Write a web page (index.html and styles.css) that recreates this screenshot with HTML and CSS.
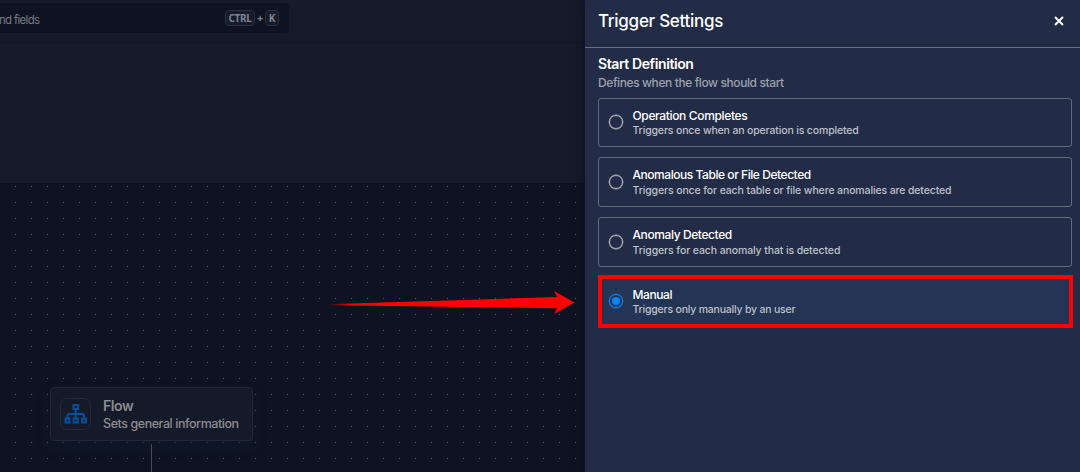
FILE: index.html
```html
<!DOCTYPE html>
<html lang="en">
<head>
<meta charset="utf-8">
<title>Trigger Settings</title>
<link rel="stylesheet" href="styles.css">
</head>
<body>
<div class="app">
  <main class="workspace">
    <header class="topbar">
      <div class="search">
        <span class="search-text">nd fields</span>
        <span class="shortcut"><kbd>CTRL</kbd><span class="plus">+</span><kbd class="key">K</kbd></span>
      </div>
    </header>
    <div class="band"></div>
    <section class="canvas">
      <div class="node">
        <div class="node-icon">
          <svg width="24" height="22" viewBox="0 0 24 22" fill="none" stroke="#02509f" stroke-width="2">
            <path d="M9.500 2h4.500v4h-4.500zM1.500 15.500h4v4h-4zM9.750 15.500h4v4h-4zM18 15.500h4v4h-4zM11.750 6v9.500M3.500 15.500v-3q0-1.500 1.500-1.500h13.500q1.500 0 1.500 1.500v3"/>
          </svg>
        </div>
        <div class="node-body">
          <div class="node-title">Flow</div>
          <div class="node-sub">Sets general information</div>
        </div>
      </div>
      <div class="connector"></div>
      <svg class="arrow" width="250" height="26" viewBox="0 0 250 26">
        <defs><linearGradient id="tail"><stop offset="0" stop-color="#f00" stop-opacity="0"/><stop offset=".1" stop-color="#f00"/></linearGradient></defs>
        <path fill="url(#tail)" d="M0 14.300L230 7L227 1L247.500 12.600L227 24L230 18.200L0 15.200z"/>
      </svg>
    </section>
  </main>
  <aside class="panel">
    <header class="panel-head">
      <h1>Trigger Settings</h1>
      <svg width="10" height="10" viewBox="0 0 10 10" stroke="#fff" stroke-width="1.900"><path d="M1 1l8 8M9 1l-8 8"/></svg>
    </header>
    <div class="panel-body">
      <h2>Start Definition</h2>
      <p class="lead">Defines when the flow should start</p>
      <div class="options">
        <label class="option first"><span class="radio"></span><span class="copy"><b class="t1">Operation Completes</b><small class="s1">Triggers once when an operation is completed</small></span></label>
        <label class="option"><span class="radio"></span><span class="copy"><b class="t2">Anomalous Table or File Detected</b><small class="s2">Triggers once for each table or file where anomalies are detected</small></span></label>
        <label class="option"><span class="radio"></span><span class="copy"><b class="t3">Anomaly Detected</b><small class="s3">Triggers for each anomaly that is detected</small></span></label>
        <label class="option selected"><span class="radio"></span><span class="copy"><b class="t4">Manual</b><small class="s4">Triggers only manually by an user</small></span></label>
      </div>
    </div>
  </aside>
</div>
</body>
</html>
```
FILE: styles.css
```css
* { box-sizing: border-box; margin: 0; padding: 0; }
body { width: 1080px; height: 472px; overflow: hidden; background: #0e1322; font-family: Inter, "Liberation Sans", sans-serif; }
.app { display: grid; grid-template-columns: 585px 495px; height: 472px; }
.workspace { display: flex; flex-direction: column; background: #151b2a; min-width: 0; }
.topbar { height: 43px; padding-top: 3px; border-bottom: 1px solid #121724; }
.search { width: 289px; height: 30px; background: #0e1322; border-radius: 0 4px 4px 0; display: flex; justify-content: space-between; align-items: center; padding: 0 10px 0 0; }
.search-text { font-size: 11.500px; line-height: 16px; margin: 3px 0 0 -1px; color: #777b85; letter-spacing: -.7px; white-space: nowrap; }
.shortcut { display: flex; align-items: center; }
kbd { width: 30px; height: 16px; border: 1px solid #2c303d; border-radius: 4px; background: #151b2a; color: #80848d; font: 700 10px/14px "Noto Sans", sans-serif; text-align: center; letter-spacing: -.3px; }
kbd.key { width: 14px; }
.plus { width: 10px; text-align: center; color: #80848d; font: 700 10px/14px "Noto Sans", sans-serif; }
.band { height: 140px; }
.canvas { position: relative; flex: 1; padding: 204px 0 0 50px; background: conic-gradient(at 1px 1px, transparent 75%, #5a5d68 0) 15px 3px / 16px 16px #0e1322; }
.node { width: 203px; height: 54px; display: flex; padding: 10px 9px 10px 9px; gap: 12px; border: 1px solid #232836; border-radius: 4px; background: #151a29; box-shadow: 0 6px 12px rgba(14, 29, 46, .7); }
.node-icon { width: 31px; height: 32px; flex: none; border: 1px solid #242937; border-radius: 7px; display: grid; place-items: center; }
.node-body { color: #8b8c90; white-space: nowrap; margin-top: -1px; }
.node-title { font-size: 14px; font-weight: 600; line-height: 18px; letter-spacing: -.4px; }
.node-sub { font-size: 12.500px; font-weight: 500; line-height: 16px; letter-spacing: -.44px; margin-top: 1px; }
.connector { width: 1px; height: 28px; margin: 3px 0 0 101px; background: #484c56; }
.arrow { position: absolute; left: 327px; top: 106.500px; }
.panel { background: #232c47; box-shadow: -1px 0 10px rgba(8, 12, 24, .65); z-index: 1; color: #fff; }
.panel-head { height: 48px; border-bottom: 1px solid #66707f; display: flex; align-items: center; justify-content: space-between; padding: 0 16px 5px 13px; }
h1 { font-size: 17px; font-weight: 500; line-height: 22px; letter-spacing: -.28px; }
.panel-body { padding: 7px 8px 0 13px; }
h2 { font-size: 14px; font-weight: 600; line-height: 18px; letter-spacing: -.4px; }
.lead { font-size: 12px; font-weight: 500; line-height: 16px; margin-top: 2px; color: #9da1ad; letter-spacing: -.4px; }
.options { display: grid; grid-template-rows: 49px 50px 50px 53px; row-gap: 10px; margin-top: 7px; }
.option { display: flex; align-items: center; padding-left: 10px; border: 1px solid #606a7a; border-radius: 3px; }
.radio { width: 14px; height: 14px; border: 1.500px solid #b5b9c2; border-radius: 50%; flex: none; margin-right: 9.500px; box-shadow: 0 0 0 .4px #b5b9c2; }
.first .radio { margin-top: -2px; }
.copy { display: flex; flex-direction: column; white-space: nowrap; }
.copy b { font-size: 12px; line-height: 16px; font-weight: 500; }
.copy small { font-size: 10.500px; line-height: 14px; font-weight: 500; color: #bdc1ca; }
.t1 { letter-spacing: -.35px; }
.t2 { letter-spacing: -.45px; }
.t3 { letter-spacing: -.4px; }
.t4 { letter-spacing: -.4px; }
.s1 { letter-spacing: -.15px; }
.s2 { letter-spacing: -.125px; }
.s3 { letter-spacing: -.11px; }
.s4 { letter-spacing: -.2px; }
.s2, .s3 { margin-top: 1px; margin-bottom: -1px; }
.option.selected { margin: -2px -1px 2px 0; padding-left: 7px; border: 4px solid #f00; border-radius: 0; background: #243455; }
.selected .radio { margin-top: -1px; border-color: #0785f2; box-shadow: 0 0 0 .4px #0785f2; display: grid; place-items: center; }
.selected .radio::before { content: ""; width: 8px; height: 8px; border-radius: 50%; background: #0785f2; }
```
